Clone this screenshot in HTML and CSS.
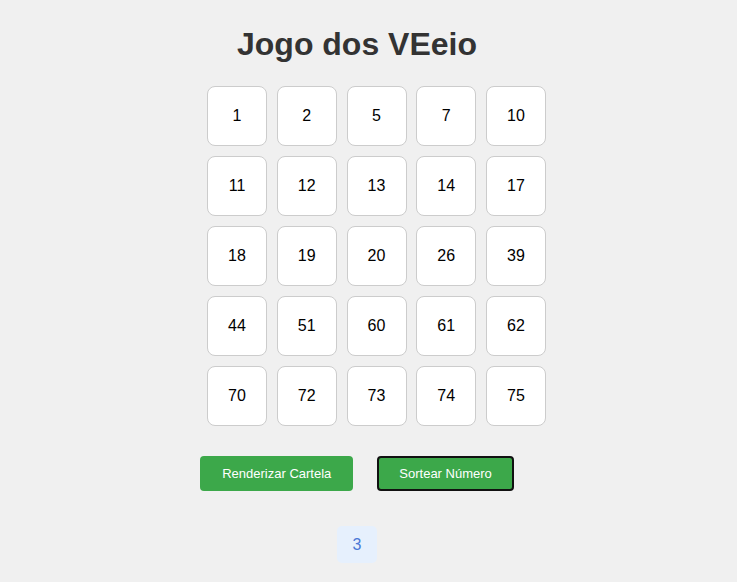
FILE: index.html
```html
<!DOCTYPE html>
<html lang="pt">
<head>
<meta charset="utf-8">
<title>Jogo dos VEeio</title>
<link rel="stylesheet" href="styles.css">
</head>
<body>
<div class="page">
  <h1 class="title">Jogo dos VEeio</h1>
  <div class="board">
    <div class="cell">1</div><div class="cell">2</div><div class="cell">5</div><div class="cell">7</div><div class="cell">10</div>
    <div class="cell">11</div><div class="cell">12</div><div class="cell">13</div><div class="cell">14</div><div class="cell">17</div>
    <div class="cell">18</div><div class="cell">19</div><div class="cell">20</div><div class="cell">26</div><div class="cell">39</div>
    <div class="cell">44</div><div class="cell">51</div><div class="cell">60</div><div class="cell">61</div><div class="cell">62</div>
    <div class="cell">70</div><div class="cell">72</div><div class="cell">73</div><div class="cell">74</div><div class="cell">75</div>
  </div>
  <div class="actions">
    <button class="btn">Renderizar Cartela</button>
    <button class="btn btn-focus">Sortear Número</button>
  </div>
  <div class="drawn">
    <div class="ball">3</div>
  </div>
</div>
</body>
</html>
```
FILE: styles.css
```css
html, body {
  margin: 0;
  padding: 0;
  background: #f0f0f0;
  font-family: "Liberation Sans", Arial, sans-serif;
}
.page {
  width: 714px;
  display: flex;
  flex-direction: column;
  align-items: center;
}
.title {
  margin: 26px 0 0;
  font-size: 32px;
  font-weight: bold;
  color: #333;
  line-height: 37px;
}
.board {
  margin-top: 23px;
  margin-left: 39px;
  display: grid;
  grid-template-columns: repeat(5, 60px);
  grid-auto-rows: 60px;
  gap: 10px 9.75px;
}
.cell {
  box-sizing: border-box;
  background: #fff;
  border: 1px solid #ccc;
  border-radius: 8px;
  display: flex;
  align-items: center;
  justify-content: center;
  font-size: 16px;
  color: #000;
}
.actions {
  margin-top: 30px;
  display: flex;
  gap: 24px;
}
.btn {
  height: 35px;
  padding: 0 20px;
  border: 2px solid transparent;
  border-radius: 4px;
  background: #3ca84a;
  color: #fff;
  font-family: "Liberation Sans", Arial, sans-serif;
  font-size: 13px;
}
.btn-focus {
  border-color: #111;
}
.drawn {
  margin-top: 35px;
  display: flex;
  gap: 8px;
}
.ball {
  width: 40px;
  height: 37px;
  border-radius: 5px;
  background: #e6f0fd;
  color: #4b78d6;
  font-size: 16px;
  display: flex;
  align-items: center;
  justify-content: center;
}
```
